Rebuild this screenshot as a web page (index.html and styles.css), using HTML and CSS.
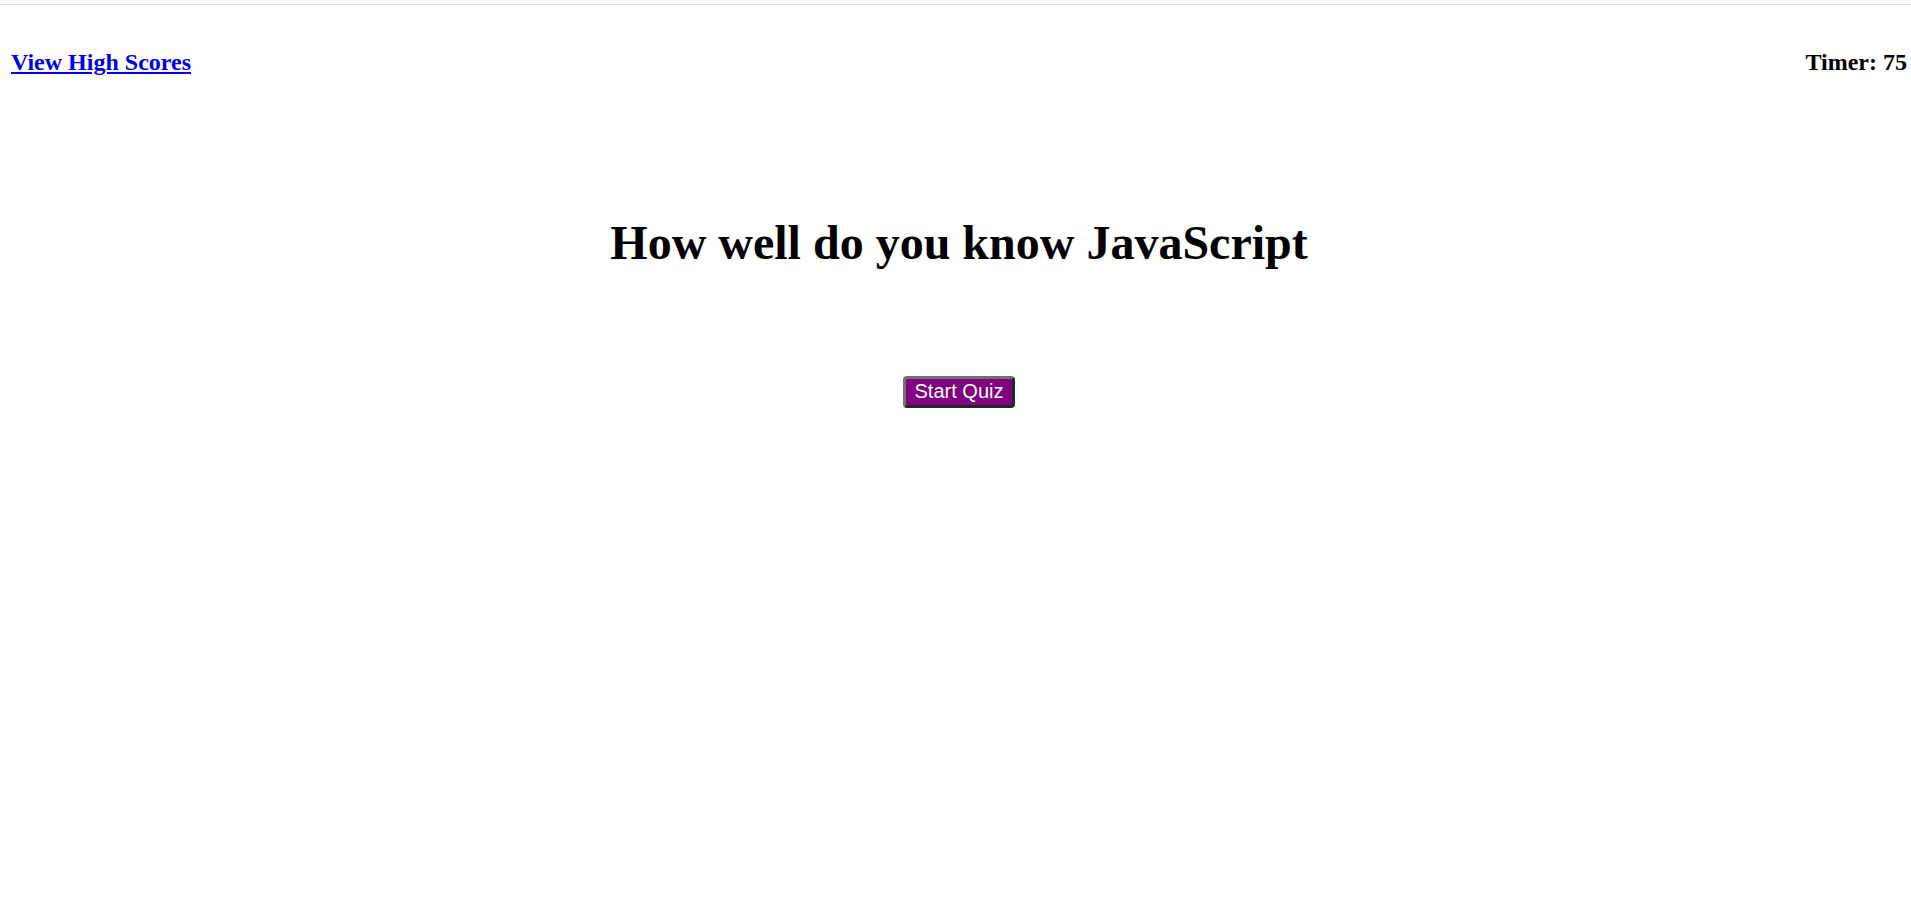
FILE: index.html
```html
<!DOCTYPE html>
<html lang="en">
<head>
<meta charset="utf-8">
<title>JavaScript Quiz</title>
<link rel="stylesheet" href="styles.css">
</head>
<body>
<div class="topline"></div>
<header class="header">
  <a class="scores-link" href="#">View High Scores</a>
  <div class="timer">Timer: 75</div>
</header>
<main class="main">
  <h1 class="title">How well do you know JavaScript</h1>
  <button class="start-btn" type="button">Start Quiz</button>
</main>
</body>
</html>
```
FILE: styles.css
```css
html, body {
  margin: 0;
  padding: 0;
  background: #ffffff;
}

body {
  font-family: "Liberation Serif", "Times New Roman", serif;
  color: #000000;
}

.topline {
  margin-top: 4px;
  border-top: 1px solid #dddddd;
}

.header {
  display: flex;
  justify-content: space-between;
  align-items: baseline;
  padding: 0 4px 0 11px;
  margin-top: 44px;
  font-size: 24px;
  font-weight: bold;
}

.scores-link {
  color: #0000ee;
  text-decoration: underline;
}

.timer {
  color: #000000;
}

.main {
  display: flex;
  flex-direction: column;
  align-items: center;
  padding-left: 7px;
}

.title {
  margin: 139px 0 0 0;
  font-size: 48px;
  font-weight: bold;
}

.start-btn {
  margin-top: 106px;
  font-family: "Liberation Sans", Arial, sans-serif;
  font-size: 20px;
  color: #ffffff;
  background: #800080;
  border-style: solid;
  border-width: 3px;
  border-color: #707070 #262626 #262626 #707070;
  border-radius: 4px;
  padding: 1px 9px 2px;
  line-height: normal;
  cursor: pointer;
}
```
